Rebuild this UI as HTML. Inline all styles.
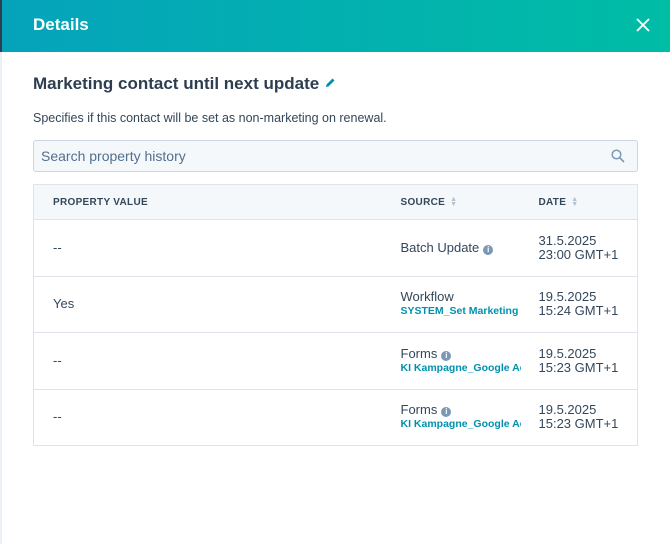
<!DOCTYPE html>
<html><head><meta charset="utf-8"><style>
*{margin:0;padding:0;box-sizing:border-box}
body{width:670px;height:544px;background:#fff;font-family:"Liberation Sans",sans-serif;color:#33475b;position:relative;overflow:hidden}
.hdr{position:absolute;left:0;top:0;width:670px;height:52px;background:linear-gradient(90deg,#05a3bb,#00bda5)}
.hdr .l{position:absolute;left:0;top:0;width:2px;height:52px;background:#2d3e50}
.hdr h1{position:absolute;left:33px;top:15px;color:#fff;font-size:17px;font-weight:bold}
.x{position:absolute;left:636px;top:18px}
.side{position:absolute;left:0;top:52px;width:2px;height:492px;background:#eaf0f6}
h2{position:absolute;left:33px;top:74px;font-size:17px;font-weight:bold;color:#2d3e50}
.desc{position:absolute;left:33px;top:111px;font-size:12.5px}
.search{position:absolute;left:33px;top:140px;width:605px;height:32px;border:1px solid #cbd6e2;border-radius:3px;background:#f5f8fa;font-size:14px;color:#516f90;padding:7px 7px}
.search svg{position:absolute;right:12px;top:8px}
table{position:absolute;left:33px;top:184px;width:605px;border-collapse:collapse;font-size:13px;table-layout:fixed}
td,th{border-top:1px solid #dfe3eb;vertical-align:middle;text-align:left}
table{border:1px solid #dfe3eb}
th{height:35px;background:#f5f8fa;font-size:10px;font-weight:bold;color:#33475b;letter-spacing:.3px}
td{height:56.5px;line-height:14px}
.c1{padding-left:19px}
.lk{color:#0091ae;font-weight:bold;font-size:10.5px;white-space:nowrap;overflow:hidden;display:block;width:120px}
.i{display:inline-block;width:10px;height:10px;border-radius:50%;background:#7c98b6;color:#fff;font-size:8px;text-align:center;line-height:10px;font-weight:bold;vertical-align:0;margin-left:4px}
.s{display:inline-block;margin-left:5px;color:#b0c1d4;font-size:7px;line-height:5px;vertical-align:-1px}
</style></head><body>
<div class="hdr"><div class="l"></div><h1>Details</h1>
<svg class="x" width="14" height="14" viewBox="0 0 14 14"><path d="M1 1L13 13M13 1L1 13" stroke="#fff" stroke-width="1.8"/></svg></div>
<div class="side"></div>
<h2>Marketing contact until next update <svg width="12" height="12" viewBox="0 0 12 12" style="vertical-align:0"><path d="M2 10L2.5 7.5L8.5 1.5L10.5 3.5L4.5 9.5Z" fill="#0091ae"/></svg></h2>
<div class="desc">Specifies if this contact will be set as non-marketing on renewal.</div>
<div class="search">Search property history<svg width="14" height="14" viewBox="0 0 14 14"><circle cx="5.5" cy="5.5" r="4.3" fill="none" stroke="#7c98b6" stroke-width="1.5"/><path d="M8.7 8.7L13 13" stroke="#7c98b6" stroke-width="1.6"/></svg></div>
<table>
<colgroup><col style="width:367px"><col style="width:138px"><col></colgroup>
<tr><th class="c1">PROPERTY VALUE</th><th>SOURCE<span class="s">▲<br>▼</span></th><th>DATE<span class="s">▲<br>▼</span></th></tr>
<tr><td class="c1">--</td><td>Batch Update<span class="i">i</span></td><td>31.5.2025<br>23:00 GMT+1</td></tr>
<tr><td class="c1">Yes</td><td>Workflow<span class="lk">SYSTEM_Set Marketing c</span></td><td>19.5.2025<br>15:24 GMT+1</td></tr>
<tr><td class="c1">--</td><td>Forms<span class="i">i</span><span class="lk">KI Kampagne_Google Ad</span></td><td>19.5.2025<br>15:23 GMT+1</td></tr>
<tr><td class="c1">--</td><td>Forms<span class="i">i</span><span class="lk">KI Kampagne_Google Ad</span></td><td>19.5.2025<br>15:23 GMT+1</td></tr>
</table>
</body></html>
